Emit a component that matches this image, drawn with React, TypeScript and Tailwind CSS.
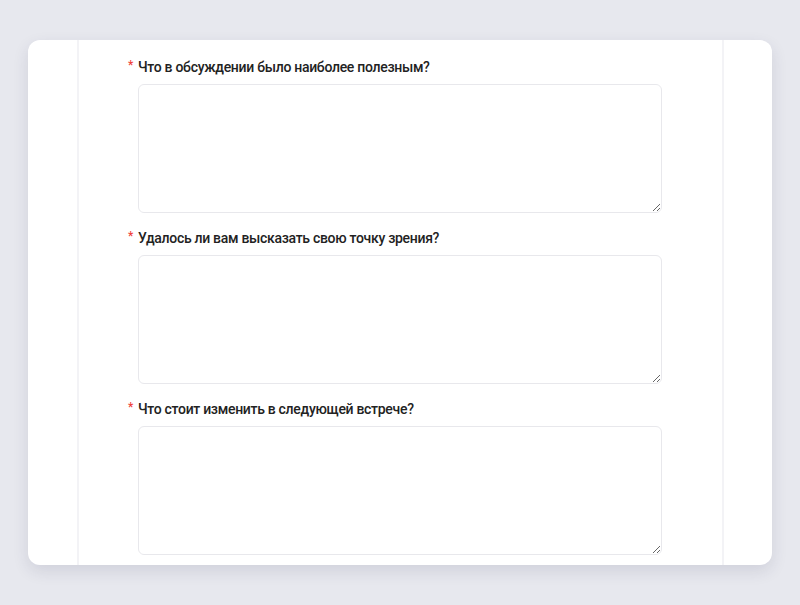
const questions = [
  "Что в обсуждении было наиболее полезным?",
  "Удалось ли вам высказать свою точку зрения?",
  "Что стоит изменить в следующей встрече?",
];

export default function App() {
  return (
    <div className="w-full h-[605px] bg-[#e7e8ee] pt-10 px-7 font-['Roboto',sans-serif]">
      <div className="flex bg-white rounded-xl shadow-[0_6px_16px_rgba(40,45,80,0.12)] overflow-hidden">
        <div className="w-[51px] border-r-2 border-[#f3f3f6]" />
        <div className="flex-1 pt-[17px] pb-[10px] pl-[49px] pr-[60px]">
          {questions.map((q, i) => (
            <div key={i} className={i > 0 ? "mt-[15px]" : ""}>
              <div className="flex items-center h-5 text-[14px] tracking-[-0.3px] font-medium text-[#222] leading-5">
                <span className="w-[10px] text-[#f0423c] text-[12px] -mt-[5px]">*</span>
                <span>{q}</span>
              </div>
              <textarea className="block mt-[7px] ml-[10px] w-[524px] h-[129px] rounded-md border border-[#e8e8ec] outline-none" />
            </div>
          ))}
        </div>
        <div className="w-[50px] border-l-2 border-[#f3f3f6]" />
      </div>
    </div>
  );
}
